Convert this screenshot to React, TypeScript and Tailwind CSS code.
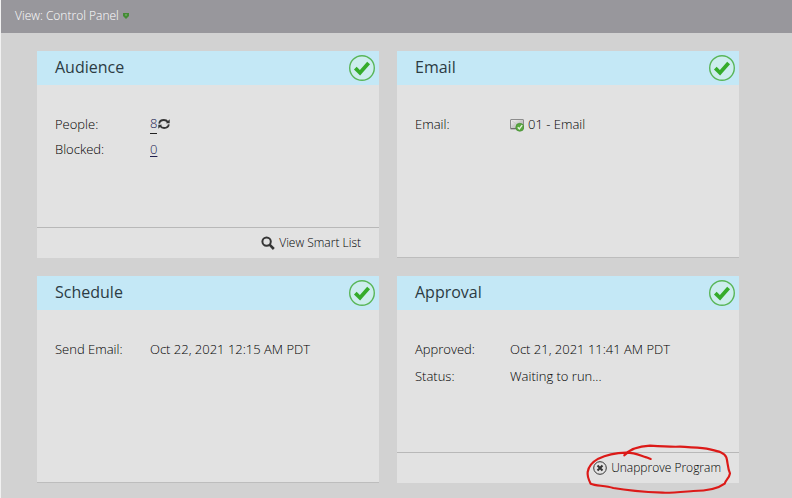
import type { ReactNode } from "react";

type CardProps = {
  title: string;
  children: ReactNode;
  footer?: ReactNode;
  loose?: boolean;
};

function CheckBadge() {
  return (
    <svg className="size-7" viewBox="0 0 28 28" role="img" aria-label="Complete">
      <circle cx="14" cy="14" r="12.3" fill="#cdedee" stroke="#59b658" strokeWidth="1.4" />
      <path d="m7.3 14.2 4.7 4.6 8.6-9.8" fill="none" stroke="#35ac2b" strokeWidth="3.8" />
    </svg>
  );
}

function RefreshIcon() {
  return (
    <svg className="h-3 w-3" viewBox="0 0 12 12" fill="none" stroke="#353535" strokeWidth="1.8" aria-hidden="true">
      <path d="M1.2 5.6C1.5 3.3 3.5 2 5.9 2c1.6 0 3 .6 3.9 1.9" />
      <path d="M10.8 6.4c-.3 2.3-2.3 3.6-4.7 3.6-1.6 0-3-.6-3.9-1.9" />
      <path d="M11.7 1.3v3.9H7.8ZM.3 10.7V6.8h3.9Z" fill="#353535" stroke="none" />
    </svg>
  );
}

function SearchIcon() {
  return (
    <svg className="size-3.5" viewBox="0 0 14 14" fill="none" stroke="#353535" aria-hidden="true">
      <circle cx="5.6" cy="5.6" r="4.2" strokeWidth="2" />
      <path d="m8.6 8.6 4.2 4.4" strokeWidth="2.6" />
    </svg>
  );
}

function MailIcon() {
  return (
    <svg className="size-3.5" viewBox="0 0 14 14" aria-hidden="true">
      <defs>
        <linearGradient id="envelope" x1="0" y1="0" x2="1" y2="1">
          <stop offset="0" stopColor="#f6f6f6" />
          <stop offset="1" stopColor="#a5a5a5" />
        </linearGradient>
      </defs>
      <rect x=".5" y="1.5" width="13" height="9" rx=".5" fill="url(#envelope)" stroke="#8c8c8c" />
      <path d="M.5 10.8h10" stroke="#626262" />
      <path d="m1.5 9.5 3.5-3M1.5 2.5 7 6.5l5.5-4" fill="none" stroke="#c4c4c4" strokeWidth=".7" />
      <circle cx="9.8" cy="9.3" r="4" fill="#58a840" stroke="#438a30" strokeWidth=".6" />
      <path d="m7.8 9.3 1.5 1.6 2.9-3.8" fill="none" stroke="#e5f4df" strokeWidth="1.4" />
    </svg>
  );
}

function CancelIcon() {
  return (
    <svg className="size-3.5" viewBox="0 0 14 14" fill="none" stroke="#353535" aria-hidden="true">
      <circle cx="7" cy="7" r="6.3" strokeWidth="1" />
      <path d="m4.5 4.5 5 5m0-5-5 5" strokeWidth="2" />
    </svg>
  );
}

function Card({ title, children, footer, loose }: CardProps) {
  return (
    <section className={`flex min-h-[207px] flex-col bg-[#e2e2e2] ${footer ? "" : "border-b border-[#bdbdbd]"}`}>
      <header className="flex h-[34px] items-center justify-between bg-[#c4e8f6] pr-[3px] pl-[18px]">
        <h2 className="pb-0.5 text-base font-normal text-[#2c3b43]">{title}</h2>
        <CheckBadge />
      </header>
      <dl className={`flex flex-1 flex-col px-[18px] pt-[30px] ${loose ? "gap-[7px]" : "gap-[5px]"}`}>{children}</dl>
      {footer && (
        <footer className="relative flex h-[31px] items-center justify-end border-t border-[#b8b8b8] pr-[18px]">
          {footer}
        </footer>
      )}
    </section>
  );
}

function Row({ label, children }: { label: string; children: ReactNode }) {
  return (
    <div className="flex h-5 items-center text-[13px]">
      <dt className="w-[95px] shrink-0">{label}</dt>
      <dd className="flex items-center">{children}</dd>
    </div>
  );
}

export default function App() {
  return (
    <div className="min-h-screen border-l border-[#f1f1f1] bg-[#d2d2d2] font-['Open_Sans','Noto_Sans',sans-serif] font-light text-black">
      <div className="flex h-[33px] items-center bg-[#98979c] px-3.5 pb-0.5">
        <button type="button" className="flex items-center gap-1 text-xs text-white">
          View: Control Panel
          <svg className="size-1.5" viewBox="0 0 6 6" aria-hidden="true">
            <path d="M0 0h6v3L3 6 0 3Z" fill="#438b35" />
            <path d="M2 1.5h2L3 3Z" fill="#9bc58f" />
          </svg>
        </button>
      </div>

      <main className="grid max-w-[774px] grid-cols-2 gap-[18px] px-9 pt-[18px] pb-[15px]">
        <Card
          title="Audience"
          footer={
            <button type="button" className="flex items-center gap-1 text-xs">
              <SearchIcon />
              View Smart List
            </button>
          }
        >
          <Row label="People:">
            <a href="#people" className="border-b border-[#222] pb-[3px] leading-[14px] text-[#202050]">8</a>
            <button type="button" aria-label="Refresh people" className="pb-[3px] pl-px">
              <RefreshIcon />
            </button>
          </Row>
          <Row label="Blocked:">
            <a href="#blocked" className="text-[#202050] underline underline-offset-2">0</a>
          </Row>
        </Card>

        <Card title="Email">
          <Row label="Email:">
            <span className="flex items-center gap-1">
              <MailIcon />
              01 - Email
            </span>
          </Row>
        </Card>

        <Card title="Schedule">
          <Row label="Send Email:">Oct 22, 2021 12:15 AM PDT</Row>
        </Card>

        <Card
          title="Approval"
          loose
          footer={
            <>
              <button type="button" className="flex items-center gap-1 text-xs">
                <CancelIcon />
                Unapprove Program
              </button>
              {/* Hand-drawn highlight around the action */}
              <svg
                className="pointer-events-none absolute -right-px -bottom-[15px] h-[58px] w-40"
                viewBox="30 30 480 174"
                fill="none"
                stroke="#dc1a18"
                strokeWidth="6.5"
                strokeLinecap="round"
                strokeLinejoin="round"
                aria-hidden="true"
              >
                <path d="M163 76C177 60 206 49 240 47C270 49 301 51 330 50C363 53 393 52 420 58C442 63 463 67 469 82C474 98 472 112 480 130C478 145 466 151 464 161C444 176 404 183 370 183C332 186 302 189 278 188C230 186 175 182 130 174C105 166 78 168 62 161C57 151 51 140 53 126C56 105 69 95 85 86C110 74 139 69 169 68C198 68 213 78 229 82L242 87" />
              </svg>
            </>
          }
        >
          <Row label="Approved:">Oct 21, 2021 11:41 AM PDT</Row>
          <Row label="Status:">Waiting to run...</Row>
        </Card>
      </main>
    </div>
  );
}
